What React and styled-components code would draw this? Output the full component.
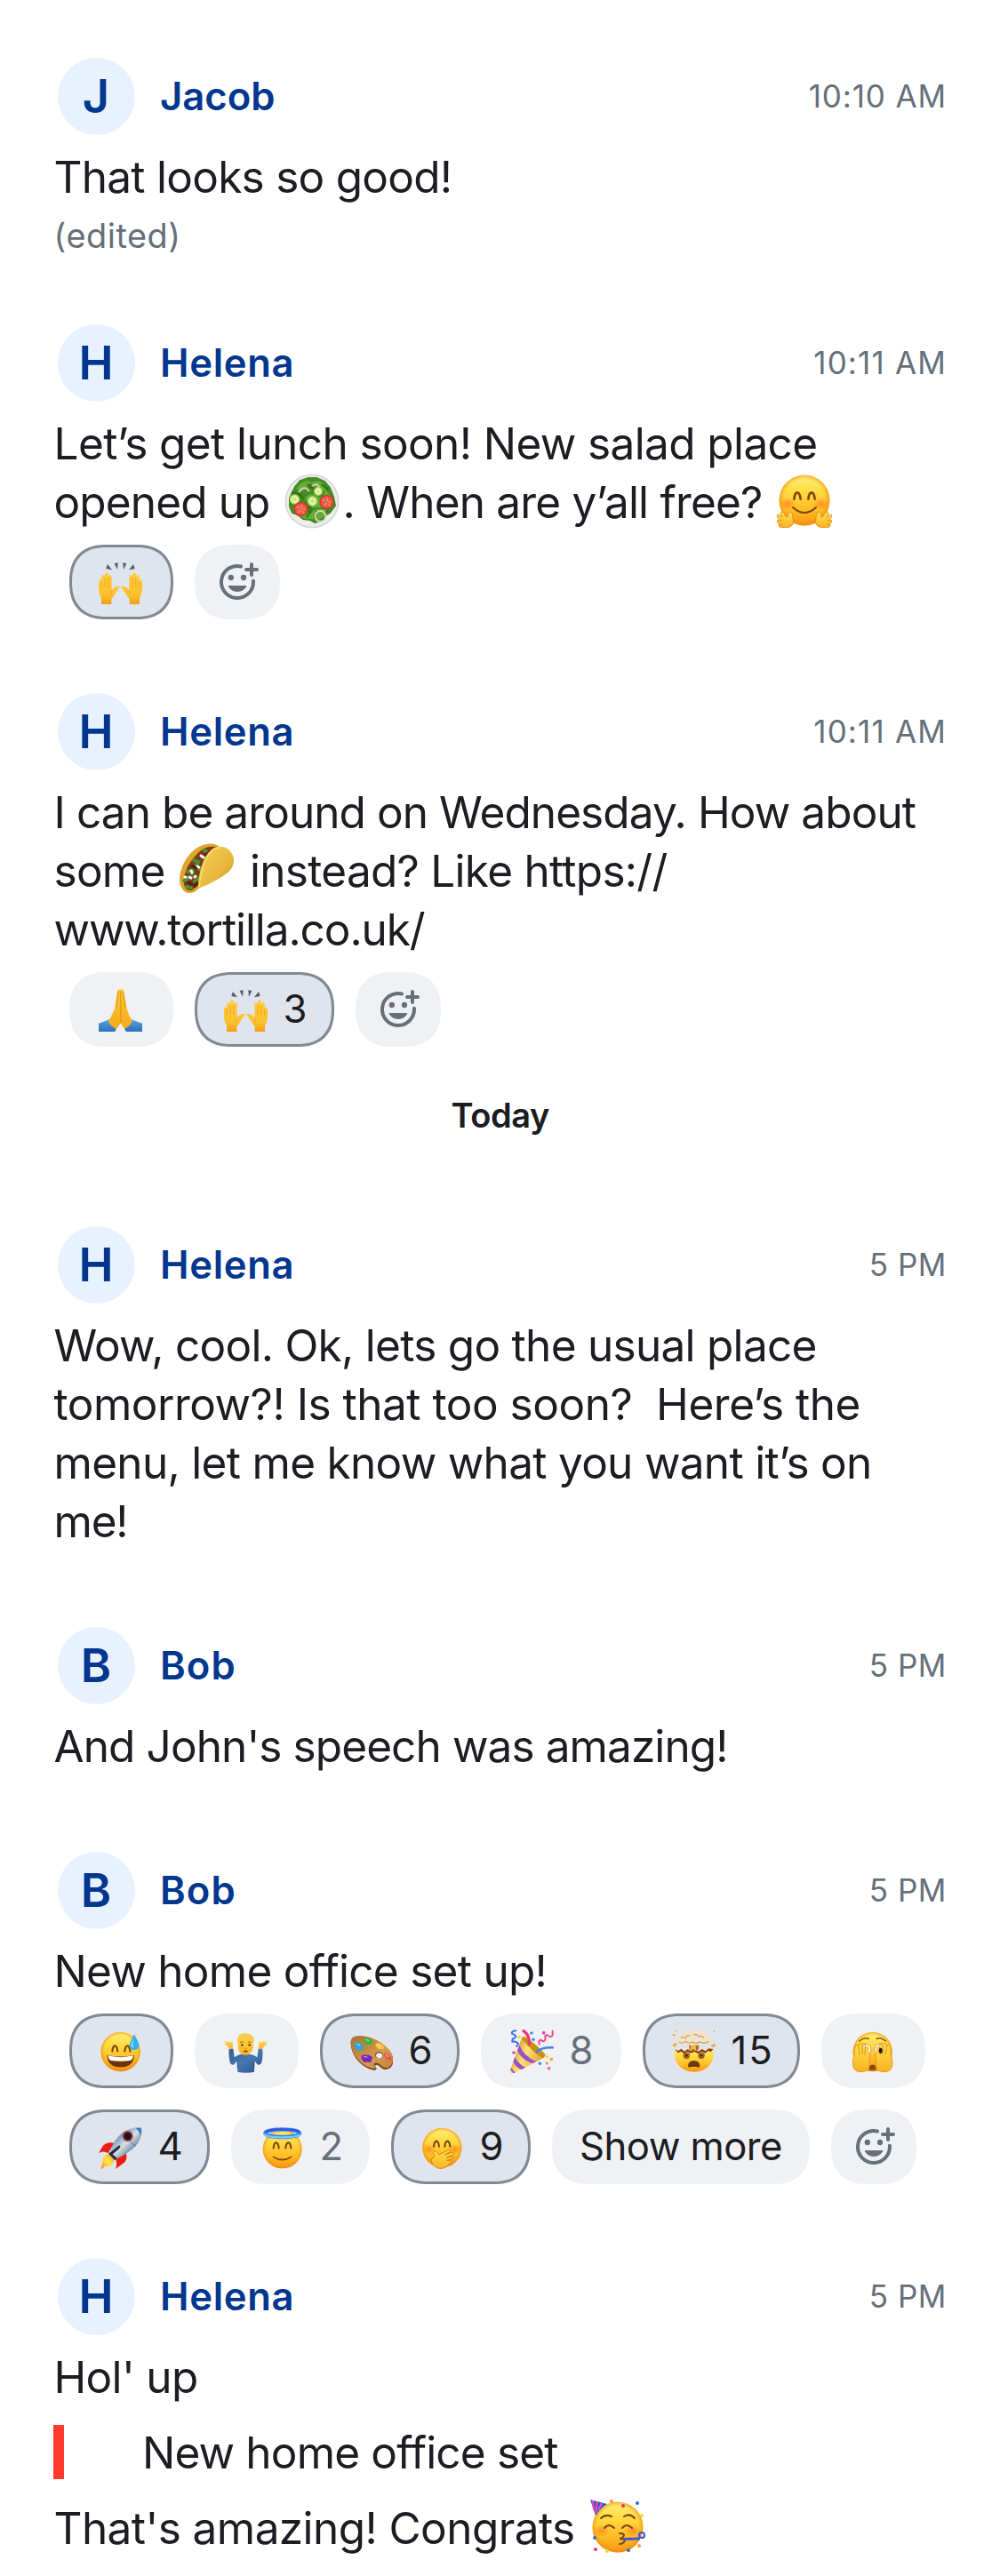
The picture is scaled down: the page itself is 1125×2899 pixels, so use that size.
import React from "react";
import styled, { createGlobalStyle } from "styled-components";

const GlobalStyle = createGlobalStyle`
  body {
    margin: 0;
    background: #fff;
    color: #1b1d22;
    font-family: Inter, "Liberation Sans", sans-serif;
  }
`;

const Feed = styled.main`
  display: flex;
  flex-direction: column;
  box-sizing: border-box;
  width: 1125px;
  height: 2899px;
  padding: 64px 60px 0 60.5px;
`;

const Message = styled.article`
  display: flex;
  flex-direction: column;
  margin-bottom: ${(p) => p.$after}px;
`;

const Header = styled.header`
  display: flex;
  align-items: center;
  height: 88px;
  margin-bottom: 14px;
  padding-left: 4px;
`;

const Avatar = styled.div`
  display: flex;
  align-items: center;
  justify-content: center;
  width: 87px;
  height: 87px;
  border-radius: 50%;
  background: #e8f2ff;
  color: #03378f;
  font-size: 52.4px;
  font-weight: 600;
`;

const Name = styled.h2`
  flex: 1;
  margin: 0 0 0 28.5px;
  color: #03378f;
  font-size: 43.6px;
  font-weight: 600;
  letter-spacing: ${(p) => p.$track}px;
`;

const Time = styled.time`
  color: #66707a;
  font-size: 35px;
  letter-spacing: ${(p) => p.$track}px;
`;

const Line = styled.p`
  margin: 0;
  height: 66px;
  font-size: 49.5px;
  line-height: 66px;
  white-space: pre;
`;

const Run = styled.span`
  letter-spacing: ${(p) => p.$track}px;
`;

const Edited = styled.p`
  margin: 0;
  color: #66707a;
  font-size: 37.8px;
  line-height: 66px;
  letter-spacing: 0.56px;
`;

const InlineEmoji = styled.span`
  display: inline-flex;
  align-items: center;
  justify-content: center;
  width: 69px;
  height: 64px;
  vertical-align: top;

  svg {
    width: 62px;
    height: 62px;
  }
`;

const Reactions = styled.div`
  display: flex;
  flex-wrap: wrap;
  gap: 24px;
  margin: 15px 0 0 17.5px;
`;

const Chip = styled.button`
  display: flex;
  align-items: center;
  justify-content: ${(p) => (p.$centered ? "center" : "flex-start")};
  gap: 17.5px;
  box-sizing: border-box;
  width: ${(p) => p.$width}px;
  height: 84px;
  padding: ${(p) => (p.$centered ? "0" : "0 0 0 30px")};
  border: 3px solid ${(p) => (p.$selected ? "#808994" : "#f0f1f5")};
  border-radius: 42px;
  corner-shape: superellipse(1.27);
  background: ${(p) => (p.$selected ? "#e0e4ec" : "#f0f1f5")};
  color: ${(p) => (p.$muted ? "#66707a" : "#1b1d22")};
  font-family: inherit;
  font-size: 43.6px;
  line-height: 1;
  letter-spacing: ${(p) => p.$track || 0}px;
  white-space: nowrap;
`;

const ChipEmoji = styled.span`
  display: flex;
  flex: none;
  width: 49px;
  height: 49px;

  svg {
    width: 49px;
    height: 49px;
  }
`;

const AddGlyph = styled.svg`
  width: 48px;
  height: 48px;
`;

const SharedDefs = styled.svg`
  display: block;
  width: 0;
  height: 0;
`;

const DayDivider = styled.div`
  margin-bottom: 100px;
  font-size: 38px;
  font-weight: 600;
  line-height: 48px;
  letter-spacing: -0.36px;
  text-align: center;
`;

const Quote = styled.blockquote`
  display: flex;
  align-items: flex-start;
  height: 66px;
  margin: 19px 0 19px -0.5px;
`;

const QuoteBar = styled.span`
  width: 12px;
  height: 61px;
  margin: 2px 88px 0 0;
  background: #ff3b30;
`;

function FaceDefs() {
  return (
    <SharedDefs aria-hidden="true">
      <defs>
        <linearGradient id="faceTone" x1="0" y1="0" x2="0" y2="1">
          <stop offset="0" stopColor="#fff07a" />
          <stop offset=".3" stopColor="#ffdc45" />
          <stop offset=".7" stopColor="#ffba24" />
          <stop offset="1" stopColor="#f79413" />
        </linearGradient>
        <radialGradient id="faceRim">
          <stop offset=".82" stopColor="#f08a0c" stopOpacity="0" />
          <stop offset="1" stopColor="#ee850b" stopOpacity=".6" />
        </radialGradient>
        <radialGradient id="faceBlush">
          <stop offset="0" stopColor="#ff6a1f" stopOpacity=".6" />
          <stop offset="1" stopColor="#ff6a1f" stopOpacity="0" />
        </radialGradient>
        <linearGradient id="palmTone" x1="0" y1="0" x2="0" y2="1">
          <stop offset="0" stopColor="#ffe052" />
          <stop offset="1" stopColor="#f9b21f" />
        </linearGradient>
      </defs>
    </SharedDefs>
  );
}

function Face({ cx = 74, cy = 75, r = 66.5 }) {
  return (
    <g>
      <circle cx={cx} cy={cy} r={r} fill="url(#faceTone)" />
      <circle cx={cx} cy={cy} r={r} fill="url(#faceRim)" />
    </g>
  );
}

function SmileEyes({ left, right, y, s = 1 }) {
  return (
    <g fill="none" stroke="#7a4708" strokeWidth={6.5 * s} strokeLinecap="round">
      {[left, right].map((x) => (
        <path key={x} d={`M${x - 9 * s} ${y + 9 * s}Q${x - 7 * s} ${y - 9 * s} ${x} ${y - 9 * s}T${x + 9 * s} ${y + 9 * s}`} />
      ))}
    </g>
  );
}

function Sweat() {
  return (
    <svg viewBox="0 0 147 147" role="img" aria-label="grinning face with sweat">
      <Face />
      <SmileEyes left={55} right={97} y={64} />
      <path d="M28 86Q74 97 120 86Q118 127 74 127T28 86Z" fill="#6b3407" />
      <path d="M31 88Q74 99 117 88Q115 104 105 105Q74 110 43 105Q33 103 31 88Z" fill="#fff" />
      <path d="M120 16Q136 44 136 54Q136 69 120 69T104 54Q104 44 120 16Z" fill="#36aef2" />
      <path d="M119 27Q111 45 110 54Q112 62 117 63Q112 48 119 27Z" fill="#b9ebff" />
    </svg>
  );
}

function Halo() {
  return (
    <svg viewBox="0 0 147 147" role="img" aria-label="smiling face with halo">
      <Face cy={79} r={66} />
      <ellipse cx="74" cy="26" rx="58" ry="13" fill="none" stroke="#3f7fee" strokeWidth="13" />
      <path d="M17 23Q23 13 74 13T131 23" fill="none" stroke="#2458e6" strokeWidth="7" />
      <path d="M12 30Q22 40 74 40T136 30" fill="none" stroke="#71cfff" strokeWidth="7" />
      <SmileEyes left={53} right={94} y={67} />
      <path d="M44 106Q74 126 104 106" fill="none" stroke="#7a4708" strokeWidth="5" strokeLinecap="round" />
    </svg>
  );
}

function Giggle() {
  return (
    <svg viewBox="0 0 147 147" role="img" aria-label="face with hand over mouth">
      <Face cx={73} />
      <ellipse cx="29" cy="80" rx="22" ry="18" fill="url(#faceBlush)" />
      <ellipse cx="117" cy="80" rx="22" ry="18" fill="url(#faceBlush)" />
      <SmileEyes left={54} right={91} y={62} />
      <path d="M46 88Q53 82 59 93L62 99 95 82Q103 80 101 87L82 99 108 90Q116 91 110 98L88 108 111 104Q116 107 109 112L89 118 104 118Q109 122 101 126Q91 140 75 145Q61 148 50 139Q40 131 37 120Q35 111 46 107Q50 100 44 94Q43 90 46 88Z" fill="url(#palmTone)" stroke="#d9810d" strokeWidth="3" strokeLinejoin="round" />
    </svg>
  );
}

function MindBlown() {
  return (
    <svg viewBox="0 0 147 147" role="img" aria-label="exploding head">
      <path d="M9 65L21 72 31 65 42 74 53 66 62 73 76 67 89 74 101 66 113 73 124 64 139 66Q142 88 136 104Q119 142 74 143Q30 142 13 106Q5 88 9 65Z" fill="url(#faceTone)" />
      <path d="M9 65L21 72 31 65 42 74 53 66 62 73 76 67 89 74 101 66 113 73 124 64 139 66L132 75 122 72 112 80 101 74 88 81 75 75 62 80 52 74 41 81 30 74 20 79Z" fill="#8e3c0c" />
      <path d="M56 46H92L89 68 74 74 59 68Z" fill="#a4682c" />
      <path d="M65 50L61 72 72 65 82 73 80 50Z" fill="#f6b73c" />
      <path d="M14 40Q13 27 27 25Q28 11 43 12Q54 1 69 5Q86-2 99 9Q114 8 118 20Q134 22 134 37Q136 50 120 49Q112 57 99 49Q89 57 76 51Q62 57 52 50Q40 54 32 48Q15 52 14 40Z" fill="#f4e2c8" />
      <path d="M29 28Q39 21 45 30Q51 16 62 21M72 19Q84 12 90 24Q101 19 108 29M23 42Q36 50 46 40Q58 50 69 41Q81 51 92 41Q106 51 124 40" fill="none" stroke="#c9a57a" strokeWidth="4" />
      <path d="M0 17l9-2 3 7-8 0ZM11 6l4-5 4 5ZM137 6l6-4 0 8ZM1 52l12-7 4 5-9 9ZM131 54l15-7-1 11-9 1Z" fill="#f5a51d" />
      {[49, 99].map((x) => (
        <g key={x}>
          <circle cx={x} cy="88" r="11" fill="#8d5013" />
          <circle cx={x} cy="88" r="7.5" fill="#bd8033" />
          <circle cx={x} cy="88" r="4.5" fill="#3c2106" />
        </g>
      ))}
      <path d="M54 124Q55 105 74 105T94 124Q93 129 87 127Q74 124 61 127Q55 129 54 124Z" fill="#6b3a0a" />
    </svg>
  );
}

function PeekHand() {
  return (
    <path d="M13 80Q12 58 19 53Q24 50 26 58Q29 45 35 46Q40 47 39 58Q43 46 49 50Q53 53 49 64Q56 56 60 61Q62 66 57 76L64 83Q70 91 63 97V125Q60 142 37 143Q12 144 8 123Q5 105 13 80Z" fill="url(#palmTone)" stroke="#de8c10" strokeWidth="2.5" />
  );
}

function Peek() {
  return (
    <svg viewBox="0 0 147 147" role="img" aria-label="face with peeking eye">
      <Face />
      <path d="M30 39Q44 25 60 31M88 31Q104 25 118 39" fill="none" stroke="#87500b" strokeWidth="5" strokeLinecap="round" />
      <ellipse cx="43" cy="67" rx="26" ry="20" fill="#fff" stroke="#b86a10" strokeWidth="2" />
      <ellipse cx="106" cy="67" rx="26" ry="20" fill="#fff" stroke="#b86a10" strokeWidth="2" />
      <path d="M62 124Q74 113 86 124L84 137H64Z" fill="#8b4a08" />
      <PeekHand />
      <g transform="translate(148 0) scale(-1 1)">
        <PeekHand />
      </g>
      <path d="M27 58L30 85M39 58L40 84M49 64L48 86M121 58L118 85M109 58L108 84M99 64L100 86" stroke="#e0900f" strokeWidth="3" />
      <ellipse cx="101" cy="71" rx="6" ry="9" fill="#1d1206" />
    </svg>
  );
}

function Palette() {
  return (
    <svg viewBox="0 0 147 147" role="img" aria-label="artist palette">
      <defs>
        <linearGradient id="paletteWood" x1="0" y1="0" x2="1" y2="1">
          <stop offset="0" stopColor="#a96e32" />
          <stop offset=".6" stopColor="#d39a50" />
          <stop offset="1" stopColor="#c18136" />
        </linearGradient>
      </defs>
      <path d="M5 43Q5 26 26 23Q65 18 107 47Q149 75 148 106Q147 127 131 133Q117 139 107 129Q99 119 90 119Q84 124 92 131Q93 139 81 137Q47 131 22 97Q4 70 5 43Z" fill="#76431a" />
      <path d="M5 40Q6 24 27 22Q66 18 108 45Q148 72 147 101Q146 122 130 128Q117 132 108 122Q98 110 86 113Q80 118 88 127Q89 133 79 131Q47 125 22 92Q4 67 5 40Z" fill="url(#paletteWood)" />
      <ellipse cx="100" cy="86" rx="13" ry="10" fill="#85501f" />
      <ellipse cx="101" cy="88" rx="10.5" ry="8.5" fill="#f4f6fa" />
      <path d="M19 43Q27 38 34 47Q44 48 50 61Q48 69 39 70Q31 74 26 66Q16 65 20 57Q14 50 19 43Z" fill="#29a9dd" />
      <path d="M50 32Q56 24 64 29Q75 29 79 43Q77 53 65 50Q56 54 52 45Q45 39 50 32Z" fill="#35b83d" />
      <path d="M90 47Q97 41 104 49Q115 51 118 62Q113 68 105 65Q97 69 94 61Q85 55 90 47Z" fill="#f6c83a" />
      <path d="M117 82Q125 78 131 86Q142 90 144 102Q138 107 131 101Q122 103 122 94Q112 89 117 82Z" fill="#ee4f4b" />
      <path d="M42 88Q49 82 58 86Q72 84 79 97Q74 100 74 108Q68 114 59 109Q50 114 45 104Q38 98 42 88Z" fill="#7a28b8" />
      <path d="M27 49l8 4M58 34l7 4M97 53l6 2M124 87l6 4M50 91l9 2" stroke="#fff" strokeOpacity=".5" strokeWidth="4" strokeLinecap="round" />
    </svg>
  );
}

function Party() {
  const dots = [
    [30, 25, "#f8d53c"], [72, 12, "#4a88ef"], [78, 34, "#4a88ef"], [113, 11, "#ee4b84"], [12, 78, "#ee4b84"],
    [124, 91, "#f8d53c"], [139, 100, "#f4a13b"], [100, 115, "#4a88ef"], [124, 114, "#f4a13b"], [131, 131, "#f06cae"],
  ];
  return (
    <svg viewBox="0 0 147 147" role="img" aria-label="party popper">
      <defs>
        <linearGradient id="popperCone" x1="0" y1=".3" x2="1" y2=".8">
          <stop offset="0" stopColor="#c98a12" />
          <stop offset=".4" stopColor="#ffe173" />
          <stop offset="1" stopColor="#d79716" />
        </linearGradient>
      </defs>
      <path d="M0 138L34 42Q38 24 50 25Q85 46 118 84Q118 93 107 99L14 147Q1 150 0 138Z" fill="url(#popperCone)" />
      <path d="M39 31Q38 24 50 25Q85 46 118 84Q119 92 111 96Q100 93 76 71T39 31Z" fill="#c9901d" />
      <path d="M24 71Q38 102 75 114L88 108Q44 90 31 51ZM10 109Q20 130 38 135L51 128Q28 117 16 92ZM1 134L3 128Q10 140 18 145L10 148Z" fill="#9a4fd0" />
      <path d="M64 49Q65 17 45 5" fill="none" stroke="#f0366b" strokeWidth="10" strokeLinecap="round" />
      <path d="M86 77Q105 59 146 61" fill="none" stroke="#3f83ef" strokeWidth="8" />
      <path d="M19 4Q3 5 6 14Q24 20 16 28Q5 31 7 41Q19 39 27 47L22 57" fill="none" stroke="#3c74e8" strokeWidth="6" strokeLinecap="round" />
      <path d="M99 50Q93 37 104 35Q115 47 119 30Q115 16 126 19Q137 30 143 19V5" fill="none" stroke="#ee4b84" strokeWidth="6" strokeLinecap="round" />
      {dots.map(([x, y, fill]) => (
        <circle key={`${x}-${y}`} cx={x} cy={y} r="5.5" fill={fill} />
      ))}
    </svg>
  );
}

function HugHand() {
  return (
    <path d="M9 60.500Q3 61 2 59Q1 57 5 57.500Q0 56 0 53Q1 51 5 53Q-1 49 0 46.500Q2 45 6 49Q3 44 5 43Q7 42 10 48L12 49Q12 43 15 43Q18 44 18 50Q20 58 14 60Q12 61 9 60.500Z" fill="url(#palmTone)" stroke="#dd8b12" strokeWidth=".9" />
  );
}

function Hug() {
  return (
    <svg viewBox="0 0 62 62" role="img" aria-label="hugging face">
      <Face cx={31} cy={30} r={28.5} />
      <ellipse cx="12" cy="34" rx="9" ry="7" fill="url(#faceBlush)" />
      <ellipse cx="50" cy="34" rx="9" ry="7" fill="url(#faceBlush)" />
      <SmileEyes left={23} right={39} y={25} s={0.4} />
      <path d="M18 38Q31 50 44 38" fill="none" stroke="#7a4708" strokeWidth="2" strokeLinecap="round" />
      <HugHand />
      <g transform="translate(62 0) scale(-1 1)">
        <HugHand />
      </g>
    </svg>
  );
}

function Partying() {
  const confetti = [
    [37, 7, "#e5345f"], [53, 4, "#2f65d8"], [58, 18, "#f6d636"], [24, 2, "#f2992e"], [55, 52, "#f4a13b"],
    [43, 57, "#2f65d8"], [19, 58, "#f6d636"], [6, 56, "#e5345f"], [5, 43, "#2f65d8"],
  ];
  return (
    <svg viewBox="0 0 62 62" role="img" aria-label="partying face">
      <Face cx={31} cy={31} r={28.5} />
      <ellipse cx="13" cy="35" rx="9" ry="7" fill="url(#faceBlush)" />
      <ellipse cx="48" cy="35" rx="9" ry="7" fill="url(#faceBlush)" />
      <path d="M0 0L19 5Q12 9 6 18Z" fill="#3454c9" />
      <path d="M3 1L4 12M8 2L6 15M13 4L9 12" stroke="#ef4fb0" strokeWidth="2" />
      <g fill="none" stroke="#7a4708" strokeWidth="2" strokeLinecap="round">
        <path d="M12 21Q17 16 24 19M38 19Q45 15 50 21M16 32Q21 26 27 32M36 32Q41 26 47 32" />
        <path d="M33 38Q40 38 37 42Q34 44 33 44Q41 44 38 48Q36 50 33 50" />
      </g>
      <path d="M37 44.500L56 44" stroke="#4057cf" strokeWidth="3" />
      <circle cx="58" cy="40" r="3" fill="none" stroke="#4057cf" strokeWidth="2.2" />
      {confetti.map(([x, y, fill]) => (
        <circle key={`${x}-${y}`} cx={x} cy={y} r="2" fill={fill} />
      ))}
    </svg>
  );
}

function Salad() {
  return (
    <svg viewBox="0 0 62 62" role="img" aria-label="salad">
      <circle cx="31" cy="31" r="30.5" fill="#d5d9d9" />
      <circle cx="31" cy="31" r="28.8" fill="#eceeed" />
      <path d="M12 15L18 8 27 5 36 5 45 9 51 16 55 26 57 36 51 44 46 47 42 53 34 55 29 52 21 51 15 46 9 44 6 37 6 28 9 21Z" fill="#438b22" strokeLinejoin="round" stroke="#438b22" strokeWidth="2" />
      <path d="M13 17Q20 7 27 8T20 20ZM29 10Q41 5 46 14T35 16ZM46 18Q55 25 53 38L43 27ZM11 44Q17 36 29 45T21 50ZM29 51Q29 38 43 40T37 53ZM23 28Q30 18 42 29T31 38Z" fill="#62ad36" />
      <path d="M8 22Q17 20 21 29M26 12L32 17M42 12L49 18M30 41L25 49M36 42L34 52M49 41L46 45M22 36L30 39" stroke="#2d7015" strokeWidth="2" fill="none" />
      <path d="M16 21Q22 12 28 20M31 14Q37 10 39 15" fill="none" stroke="#e9c2c6" strokeWidth="2" />
      <circle cx="40.5" cy="48" r="6" fill="none" stroke="#e3d5c2" strokeWidth="1.8" />
      {[[11.5, 29, 5.7], [31.5, 31, 5.7], [38, 20, 5]].map(([x, y, r]) => (
        <g key={x}>
          <circle cx={x} cy={y} r={r} fill="#a9d75b" />
          <circle cx={x} cy={y} r={r - 1.3} fill="#e8f4ac" />
          <circle cx={x} cy={y} r={r - 3.4} fill="#cfe585" />
        </g>
      ))}
      {[[18.5, 40], [47.5, 32]].map(([x, y]) => (
        <g key={x}>
          <circle cx={x} cy={y} r="8.2" fill="#d33a2a" />
          <circle cx={x} cy={y} r="6.5" fill="#ea5a44" />
          <path d={`M${x - 5} ${y - 3}l4 2M${x + 1} ${y - 5}v4M${x + 5} ${y}h-4M${x - 3} ${y + 4}l3-3M${x + 2} ${y + 2}l2 3`} stroke="#f49a80" strokeWidth="1.1" />
        </g>
      ))}
    </svg>
  );
}

function Taco() {
  return (
    <svg viewBox="0 0 62 62" role="img" aria-label="taco">
      <defs>
        <linearGradient id="tacoShell" x1="0" y1="0" x2="1" y2="1">
          <stop offset="0" stopColor="#f3d154" />
          <stop offset=".6" stopColor="#e8b83c" />
          <stop offset="1" stopColor="#c98918" />
        </linearGradient>
      </defs>
      <path d="M45 5C38-1 26 1 17 8C7 16 0 30 0 42C0 50 5 58 12 57C16 57 20 54 23 50Z" fill="#dda52c" />
      <path d="M42 6C35 3 26 6 19 14C10 23 4 35 5 47C6 52 9 55 14 54L24 45Z" fill="#7b3c1c" />
      <path d="M28 9l5 3-3 5 4 2M16 20l5 2-3 5M9 33l6-2-1 5M5 43l5-2M21 29l4 3M17 44l5-4M8 50l5 1" stroke="#53902c" strokeWidth="4" strokeLinecap="round" fill="none" />
      <path d="M24 15l3 2M20 27l2 1M13 32l1 2M11 39l2 1M17 39l1-1M6 39l1 0" stroke="#fff" strokeWidth="3" strokeLinecap="round" />
      <path d="M30 14l4-3M15 27l3 2M10 45l3 2M17 49l3-3" stroke="#5a2410" strokeWidth="4" strokeLinecap="round" />
      <path d="M44 5C52 4 59 9 61 18C62 27 56 34 47 39C37 45 29 49 21 52C21 38 25 18 35 9Q39 5 44 5Z" fill="url(#tacoShell)" />
      <path d="M22 50C23 35 28 18 36 10Q40 6 45 6" fill="none" stroke="#f9df78" strokeWidth="1.5" />
    </svg>
  );
}

function RaisedHand() {
  return (
    <g>
      <path d="M9 147.500V127Q0 113 0 96V72Q0 64 4 64T9 72V60Q10 48 15 48T21 57V50Q22 40 27 40T33 50V56Q34 48 39 48T44 58V101Q50 91 59 88Q69 85 72 88Q72 91 66 95Q59 105 52 117Q49 123 43 129V147.500Z" fill="url(#handTone)" />
      <path d="M10 70V92M21.500 58V90M33 56V90M44 100Q40 108 41 114" stroke="#e79a10" strokeWidth="2" fill="none" />
    </g>
  );
}

function RaisedHands() {
  return (
    <svg viewBox="0 0 147 147" role="img" aria-label="raised hands">
      <defs>
        <linearGradient id="handTone" x1="0" y1="0" x2="0" y2="1">
          <stop offset="0" stopColor="#ffcc3e" />
          <stop offset=".7" stopColor="#fdc02c" />
          <stop offset="1" stopColor="#ef9d16" />
        </linearGradient>
      </defs>
      <path d="M25 27L30 12 45 31ZM53 9L65 7 63 30ZM94 9L82 7 84 30ZM122 27L117 12 102 31Z" fill="#555b61" />
      <RaisedHand />
      <g transform="translate(147 0) scale(-1 1)">
        <RaisedHand />
      </g>
    </svg>
  );
}

function Pray() {
  return (
    <svg viewBox="0 0 147 147" role="img" aria-label="folded hands">
      <defs>
        <linearGradient id="praySkin" x1="0" y1="0" x2="0" y2="1">
          <stop offset="0" stopColor="#ffc934" />
          <stop offset="1" stopColor="#f5a91b" />
        </linearGradient>
        <linearGradient id="praySleeve" x1="0" y1="0" x2="0" y2="1">
          <stop offset="0" stopColor="#5ba1e3" />
          <stop offset="1" stopColor="#2c6cbb" />
        </linearGradient>
      </defs>
      <path d="M0 148V119L37 106 60 137 54 148ZM147 148V119L110 106 87 137 93 148Z" fill="url(#praySleeve)" />
      <path d="M63 11Q64 4 69 4Q73 4 74 8Q75 4 79 4Q84 4 85 11L95 68Q99 85 113 111Q108 128 87 138L76 119H73L60 138Q38 129 33 111Q47 88 54 68Z" fill="url(#praySkin)" />
      <path d="M74.500 9V119M67 10L60 64M82 10L89 64" stroke="#d9870c" strokeWidth="2.5" fill="none" />
    </svg>
  );
}

function Shrug() {
  return (
    <svg viewBox="0 0 147 147" role="img" aria-label="man shrugging">
      <defs>
        <linearGradient id="shrugShirt" x1="0" y1="0" x2="1" y2="1">
          <stop offset="0" stopColor="#315e98" />
          <stop offset=".5" stopColor="#4777b3" />
          <stop offset="1" stopColor="#23508a" />
        </linearGradient>
        <linearGradient id="shrugFace" x1="0" y1="0" x2="0" y2="1">
          <stop offset="0" stopColor="#ffd34a" />
          <stop offset="1" stopColor="#f9b223" />
        </linearGradient>
      </defs>
      <path d="M18 68L12 55Q2 53 1 48L9 49Q0 43 0 39L11 44Q9 38 13 38L20 45 25 42Q31 40 29 47L30 67ZM129 68L135 55Q145 53 146 48L138 49Q147 43 147 39L136 44Q138 38 134 38L127 45 122 42Q116 40 118 47L117 67Z" fill="url(#shrugFace)" />
      <path d="M63 74H84V90H63Z" fill="#eba322" />
      <path d="M17 67L31 65 35 94Q43 86 61 83Q73 91 86 83Q104 86 112 94L116 65 130 67Q132 89 127 111Q124 121 114 119L103 106 102 143Q73 149 46 143L44 106 33 119Q23 121 20 111Q15 89 17 67Z" fill="url(#shrugShirt)" />
      <path d="M45 105L46 131M102 105L101 131" stroke="#19447a" strokeWidth="2" />
      <path d="M47 39Q47 17 73 17T99 39V55Q98 83 73 85T47 55Z" fill="url(#shrugFace)" />
      <path d="M45 41Q43 12 73 13T101 41L97 45Q96 34 92 31Q73 27 54 31Q49 36 49 45Z" fill="#f7cb4a" />
      <path d="M54 44Q59 40 65 43M81 43Q87 40 92 44" stroke="#9a6417" strokeWidth="3" fill="none" />
      <circle cx="61" cy="52" r="3.6" fill="#4b3113" />
      <circle cx="86" cy="52" r="3.6" fill="#4b3113" />
      <path d="M68 64Q73 67 78 64" stroke="#d28713" strokeWidth="2.5" fill="none" />
      <path d="M65 74Q73 67 81 74Q73 77 65 74Z" fill="#67360d" />
    </svg>
  );
}

function Rocket() {
  return (
    <svg viewBox="0 0 147 147" role="img" aria-label="rocket">
      <defs>
        <linearGradient id="rocketBody" x1="0" y1="0" x2="1" y2="1">
          <stop offset=".2" stopColor="#4b83b5" />
          <stop offset=".5" stopColor="#d9e0e3" />
          <stop offset=".75" stopColor="#56829f" />
        </linearGradient>
        <linearGradient id="rocketFlame" x1="1" y1="0" x2="0" y2="1">
          <stop offset="0" stopColor="#ff9d1b" />
          <stop offset=".5" stopColor="#ffe64b" />
          <stop offset="1" stopColor="#f68a16" />
        </linearGradient>
      </defs>
      <path d="M52 60Q30 54 16 67L0 93Q18 84 32 94ZM91 90Q99 109 88 124L57 147Q65 128 56 112Z" fill="#ec1c12" />
      <path d="M33 97Q18 98 12 116L14 121 7 147Q17 145 22 137L30 139Q49 136 54 114Z" fill="url(#rocketFlame)" />
      <path d="M33 96L43 86 65 107 54 118Q47 109 33 96Z" fill="#26384c" />
      <path d="M39 89Q49 51 80 25Q109 4 144 8Q149 40 125 69Q98 96 63 111Z" fill="url(#rocketBody)" />
      <path d="M123 8Q134 7 144 8Q147 23 141 36Q137 17 123 8Z" fill="#387fc4" />
      <path d="M81 26Q94 49 125 69" fill="none" stroke="#416a8b" strokeWidth="2" />
      <circle cx="98" cy="36" r="18" fill="#b9313a" />
      <circle cx="98" cy="36" r="12.5" fill="#161a20" />
      <path d="M36 94L63 72Q71 65 73 69Q74 74 65 82L42 101Z" fill="#1d2a3a" />
    </svg>
  );
}

function AddReactionIcon() {
  return (
    <AddGlyph viewBox="549 93 144 144" fill="none" aria-hidden="true">
      <path d="M633 112.300A54 54 0 1 0 674.800 161" stroke="#66707a" strokeWidth="12" strokeLinecap="round" />
      <path d="M669 105V141M651 123H687" stroke="#66707a" strokeWidth="12" strokeLinecap="round" />
      <circle cx="599.5" cy="150" r="9.5" fill="#66707a" />
      <circle cx="642" cy="150" r="9.5" fill="#66707a" />
      <path d="M593 177H649Q653 177 651 181Q641 198 621 198T591 181Q589 177 593 177Z" fill="#66707a" />
    </AddGlyph>
  );
}

function Reaction({ of: Drawing, count, selected, width = 117, track }) {
  return (
    <Chip $width={width} $selected={selected} $muted={!selected} $track={track}>
      <ChipEmoji>
        <Drawing />
      </ChipEmoji>
      {count && <span>{count}</span>}
    </Chip>
  );
}

function AddReaction() {
  return (
    <Chip $width={96} $centered aria-label="Add reaction">
      <AddReactionIcon />
    </Chip>
  );
}

/* A body line is a list of [text, tracking] runs and emoji components. */
function TextLine({ parts }) {
  return (
    <Line>
      {parts.map((Part, i) =>
        Array.isArray(Part) ? (
          <Run key={i} $track={Part[1]}>{Part[0]}</Run>
        ) : (
          <InlineEmoji key={i}>
            <Part />
          </InlineEmoji>
        )
      )}
    </Line>
  );
}

const nameTracking = { Jacob: 0, Helena: 0.69, Bob: 1.1 };
const timeTracking = { "10:10 AM": 0.87, "10:11 AM": 1.16, "5 PM": 0.51 };

function Post({ author, time, after = 85, lines = [], children }) {
  return (
    <Message $after={after}>
      <Header>
        <Avatar>{author[0]}</Avatar>
        <Name $track={nameTracking[author]}>{author}</Name>
        <Time $track={timeTracking[time]}>{time}</Time>
      </Header>
      {lines.map((parts, i) => (
        <TextLine key={i} parts={parts} />
      ))}
      {children}
    </Message>
  );
}

export default function App() {
  return (
    <>
      <GlobalStyle />
      <Feed>
        <Post author="Jacob" time="10:10 AM" after={66} lines={[[["That looks so good!", -0.73]]]}>
          <Edited>(edited)</Edited>
        </Post>

        <Post
          author="Helena"
          time="10:11 AM"
          after={82}
          lines={[
            [["Let’s get lunch soon! New salad place", -0.6]],
            [["opened up ", -0.86], Salad, [". When are y’all free? ", -0.79], Hug],
          ]}
        >
          <Reactions>
            <Reaction of={RaisedHands} selected />
            <AddReaction />
          </Reactions>
        </Post>

        <Post
          author="Helena"
          time="10:11 AM"
          after={53}
          lines={[
            [["I can be around on Wednesday. How about", -0.91]],
            [["some ", -0.72], Taco, [" instead? Like https://", -0.72]],
            [["www.tortilla.co.uk/", -1.08]],
          ]}
        >
          <Reactions>
            <Reaction of={Pray} />
            <Reaction of={RaisedHands} count="3" selected width={157} />
            <AddReaction />
          </Reactions>
        </Post>

        <DayDivider>Today</DayDivider>

        <Post
          author="Helena"
          time="5 PM"
          lines={[
            [["Wow, cool. Ok, lets go the usual place", -0.72]],
            [["tomorrow?! Is that too soon?  Here’s the", -0.48]],
            [["menu, let me know what you want it’s on", -0.69]],
            [["me!", -1.2]],
          ]}
        />

        <Post author="Bob" time="5 PM" lines={[[["And John's speech was amazing!", -0.9]]]} />

        <Post author="Bob" time="5 PM" after={82} lines={[[["New home office set up!", -0.72]]]}>
          <Reactions>
            <Reaction of={Sweat} selected />
            <Reaction of={Shrug} />
            <Reaction of={Palette} count="6" selected width={157} />
            <Reaction of={Party} count="8" width={158} />
            <Reaction of={MindBlown} count="15" selected width={177} track={2} />
            <Reaction of={Peek} />
            <Reaction of={Rocket} count="4" selected width={158} />
            <Reaction of={Halo} count="2" width={156} />
            <Reaction of={Giggle} count="9" selected width={157} />
            <Chip $width={290} $track={-0.52} $centered>Show more</Chip>
            <AddReaction />
          </Reactions>
        </Post>

        <Post author="Helena" time="5 PM" after={0} lines={[[["Hol' up", -0.68]]]}>
          <Quote>
            <QuoteBar />
            <TextLine parts={[["New home office set", -0.83]]} />
          </Quote>
          <TextLine parts={[["That's amazing! Congrats ", -0.57], Partying]} />
        </Post>
        <FaceDefs />
      </Feed>
    </>
  );
}
